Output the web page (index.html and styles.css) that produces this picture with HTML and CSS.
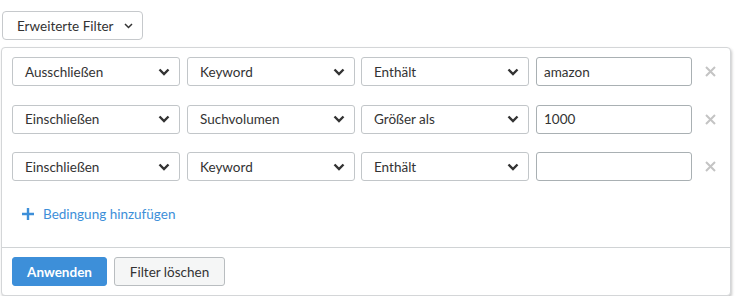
FILE: index.html
```html
<!DOCTYPE html>
<html lang="de">
<head>
<meta charset="utf-8">
<link rel="stylesheet" href="styles.css">
</head>
<body>
<div class="page">
  <button class="toggle">Erweiterte Filter
    <svg class="toggle-chev" width="9" height="6" viewBox="0 0 9 6"><polyline points="1,1 4.5,4.5 8,1" fill="none" stroke="#333" stroke-width="1.5"/></svg>
  </button>
  <div class="panel">
    <div class="rows">
      <div class="row">
        <div class="select s1"><span>Ausschließen</span><svg class="chev" width="12" height="8" viewBox="0 0 12 8"><polyline points="1.5,1.5 6,6 10.5,1.5" fill="none" stroke="#333" stroke-width="2.4"/></svg></div>
        <div class="select s2"><span>Keyword</span><svg class="chev" width="12" height="8" viewBox="0 0 12 8"><polyline points="1.5,1.5 6,6 10.5,1.5" fill="none" stroke="#333" stroke-width="2.4"/></svg></div>
        <div class="select s3"><span>Enthält</span><svg class="chev" width="12" height="8" viewBox="0 0 12 8"><polyline points="1.5,1.5 6,6 10.5,1.5" fill="none" stroke="#333" stroke-width="2.4"/></svg></div>
        <div class="input">amazon</div>
        <svg class="remove" width="11" height="11" viewBox="0 0 11 11"><path d="M1 1L10 10M10 1L1 10" stroke="#c4c4c4" stroke-width="2"/></svg>
      </div>
      <div class="row">
        <div class="select s1"><span>Einschließen</span><svg class="chev" width="12" height="8" viewBox="0 0 12 8"><polyline points="1.5,1.5 6,6 10.5,1.5" fill="none" stroke="#333" stroke-width="2.4"/></svg></div>
        <div class="select s2"><span>Suchvolumen</span><svg class="chev" width="12" height="8" viewBox="0 0 12 8"><polyline points="1.5,1.5 6,6 10.5,1.5" fill="none" stroke="#333" stroke-width="2.4"/></svg></div>
        <div class="select s3"><span>Größer als</span><svg class="chev" width="12" height="8" viewBox="0 0 12 8"><polyline points="1.5,1.5 6,6 10.5,1.5" fill="none" stroke="#333" stroke-width="2.4"/></svg></div>
        <div class="input">1000</div>
        <svg class="remove" width="11" height="11" viewBox="0 0 11 11"><path d="M1 1L10 10M10 1L1 10" stroke="#c4c4c4" stroke-width="2"/></svg>
      </div>
      <div class="row">
        <div class="select s1"><span>Einschließen</span><svg class="chev" width="12" height="8" viewBox="0 0 12 8"><polyline points="1.5,1.5 6,6 10.5,1.5" fill="none" stroke="#333" stroke-width="2.4"/></svg></div>
        <div class="select s2"><span>Keyword</span><svg class="chev" width="12" height="8" viewBox="0 0 12 8"><polyline points="1.5,1.5 6,6 10.5,1.5" fill="none" stroke="#333" stroke-width="2.4"/></svg></div>
        <div class="select s3"><span>Enthält</span><svg class="chev" width="12" height="8" viewBox="0 0 12 8"><polyline points="1.5,1.5 6,6 10.5,1.5" fill="none" stroke="#333" stroke-width="2.4"/></svg></div>
        <div class="input"></div>
        <svg class="remove" width="11" height="11" viewBox="0 0 11 11"><path d="M1 1L10 10M10 1L1 10" stroke="#c4c4c4" stroke-width="2"/></svg>
      </div>
    </div>
    <div class="add">
      <svg class="plus" width="12" height="12" viewBox="0 0 12 12"><path d="M6 0V12M0 6H12" stroke="#3d8fd9" stroke-width="2.4"/></svg>
      <span>Bedingung hinzufügen</span>
    </div>
    <div class="footer">
      <button class="btn primary">Anwenden</button>
      <button class="btn secondary">Filter löschen</button>
    </div>
  </div>
</div>
</body>
</html>
```
FILE: styles.css
```css
* { box-sizing: border-box; }
html, body { margin: 0; background: #fff; }
body {
  font-family: Lato, "Open Sans", "DejaVu Sans", sans-serif;
  font-size: 13.5px;
  color: #333;
}
.page {
  padding: 11px 0 0 1px;
  width: 731px;
}
.toggle {
  margin-left: 1px;
  height: 29px;
  width: 141px;
  border: 1px solid #c6c9cc;
  border-radius: 4px;
  background: #fff;
  font: inherit;
  color: #333;
  padding: 0 0 0 14px;
  display: flex;
  align-items: center;
  gap: 10px;
}
.toggle-chev { margin-top: 1px; }
.panel {
  margin-top: 7px;
  width: 730px;
  height: 249px;
  border: 1px solid #d4d6d8;
  border-radius: 4px;
  box-shadow: 1px 2px 3px rgba(0,0,0,0.22);
  background: #fff;
  display: flex;
  flex-direction: column;
}
.rows {
  padding: 9px 0 0 10px;
  display: flex;
  flex-direction: column;
  gap: 18.5px;
}
.row {
  display: flex;
  align-items: center;
  height: 29px;
}
.select {
  height: 29px;
  width: 168px;
  border: 1px solid #c2c6c9;
  border-radius: 3px;
  display: flex;
  align-items: center;
  justify-content: space-between;
  padding: 0 9px 0 12px;
}
.s2 { margin-left: 7px; }
.s3 { margin-left: 6px; }
.input {
  margin-left: 7px;
  height: 29px;
  width: 156px;
  border: 1px solid #a9b0b3;
  border-radius: 3px;
  padding: 0 0 0 7px;
  display: flex;
  align-items: center;
}
.remove { margin-left: 13px; }
.add {
  display: flex;
  align-items: center;
  height: 30px;
  margin-top: 18px;
  padding-left: 20px;
  color: #3d8fd9;
  gap: 9px;
}
.footer {
  margin-top: auto;
  border-top: 1px solid #d0d3d5;
  padding: 9px 0 9px 10px;
  display: flex;
  gap: 7px;
}
.btn {
  height: 29px;
  border-radius: 3px;
  font: inherit;
  padding: 0;
}
.primary {
  width: 95px;
  background: #3d8fd9;
  border: 1px solid #3d8fd9;
  color: #fff;
  font-weight: 700;
}
.secondary {
  width: 111px;
  background: #f5f6f6;
  border: 1px solid #b9bdc0;
  color: #333;
}
```
